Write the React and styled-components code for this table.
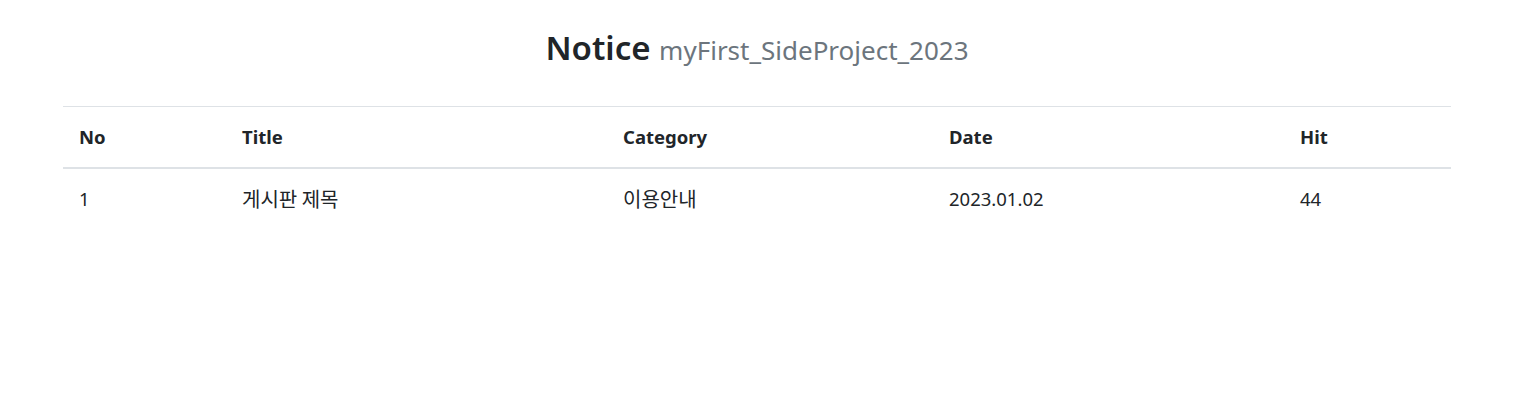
import styled, {createGlobalStyle} from "styled-components";

const GlobalStyle = createGlobalStyle`
  body {
    margin: 0;
    background: #ffffff;
    color: #212529;
    font-family: "Noto Sans", "Noto Sans CJK KR", sans-serif;
    font-size: 18.5px;
  }
`;

const NoticeBlock = styled.div`
  padding: 0 70px 0 63px;

  .notice-title {
    margin: 0;
    padding: 24px 0 32px;
    text-align: center;
    font-size: 33px;
    font-weight: 600;
    line-height: 48px;

    small {
      font-size: 26px;
      font-weight: 400;
      color: #6c757d;
    }
  }
`;

const BoardTable = styled.table`
  width: 100%;
  border-collapse: collapse;
  border-top: 1px solid #dee2e6;
  table-layout: fixed;

  th {
    padding: 18px 16px;
    line-height: 24px;
    text-align: left;
    font-weight: 700;
    border-bottom: 2px solid #dee2e6;
  }
`;

const Cell = styled.td`
  padding: 18px 16px;
  line-height: 24px;
  font-size: ${props => props.ko ? '20px' : '18.5px'};
  font-family: ${props => props.ko ? '"Noto Sans CJK KR", sans-serif' : 'inherit'};
`;

const Col = styled.col`
  width: ${props => props.size}px;
`;

const columns = [
    {name: 'No', size: 163},
    {name: 'Title', size: 381},
    {name: 'Category', size: 326},
    {name: 'Date', size: 351},
    {name: 'Hit', size: 167},
];

const posts = [
    {no: 1, title: '게시판 제목', category: '이용안내', date: '2023.01.02', hit: 44},
];

const App = () => {
    return (
        <>
            <GlobalStyle/>
            <NoticeBlock>
                <h2 className="notice-title">
                    Notice <small>myFirst_SideProject_2023</small>
                </h2>
                <BoardTable>
                    <colgroup>
                        {columns.map(col => <Col key={col.name} size={col.size}/>)}
                    </colgroup>
                    <thead>
                    <tr>
                        {columns.map(col => <th key={col.name}>{col.name}</th>)}
                    </tr>
                    </thead>
                    <tbody>
                    {posts.map(post => (
                        <tr key={post.no}>
                            <Cell>{post.no}</Cell>
                            <Cell ko>{post.title}</Cell>
                            <Cell ko>{post.category}</Cell>
                            <Cell>{post.date}</Cell>
                            <Cell>{post.hit}</Cell>
                        </tr>
                    ))}
                    </tbody>
                </BoardTable>
            </NoticeBlock>
        </>
    );
};

export default App;
